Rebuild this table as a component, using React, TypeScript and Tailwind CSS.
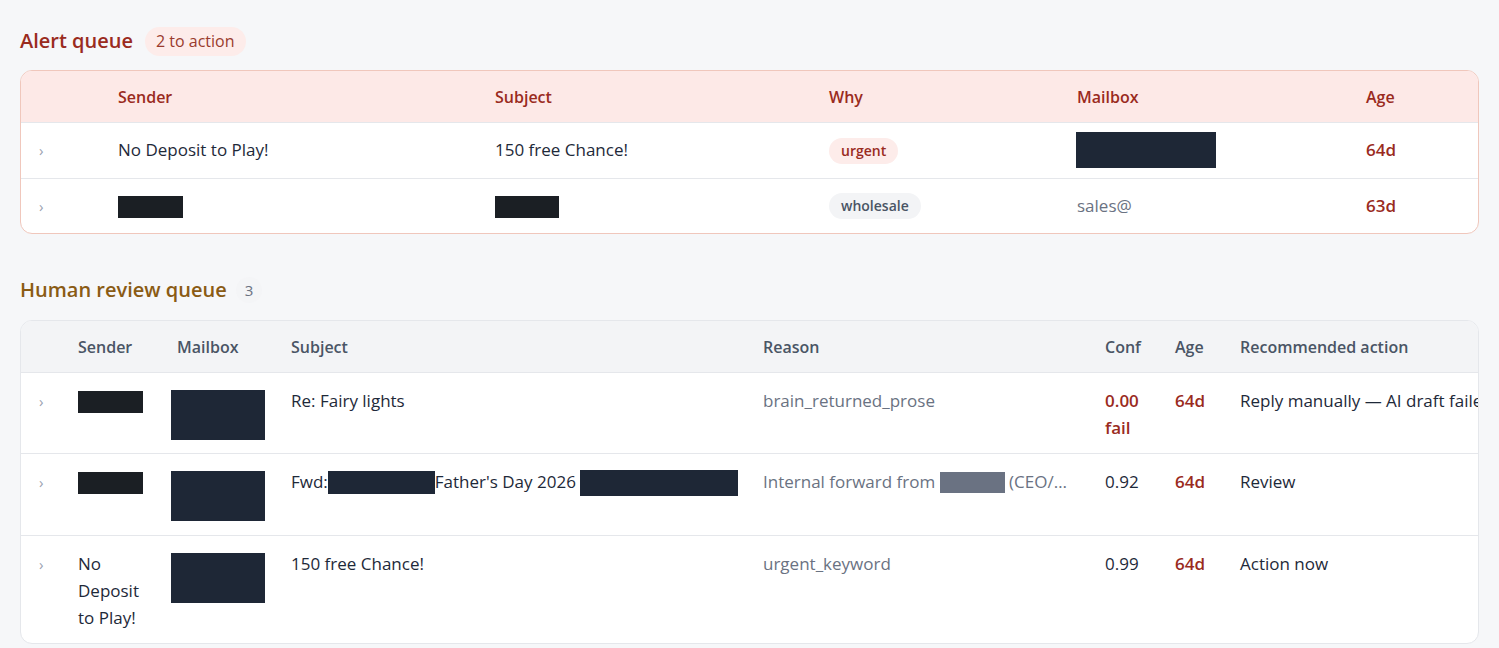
import React from 'react';

const font = { fontFamily: '"Open Sans", "Noto Sans", sans-serif' };

function Redact({ className }: { className: string }) {
  return <span className={`inline-block align-middle ${className}`} />;
}

function Chevron() {
  return <span className="-ml-0.5 text-[15px] text-gray-400">›</span>;
}

function AlertQueue() {
  return (
    <section>
      <div className="flex items-center gap-[12px] h-[30px]">
        <h2 className="text-[20px] font-semibold text-[#9a2b1e]">Alert queue</h2>
        <span className="rounded-full bg-[#fdecea] px-[11px] h-[29px] leading-[29px] text-[16px] text-[#9a3b2e]">2 to action</span>
      </div>
      <div className="mt-[14px] overflow-hidden rounded-xl border border-[#f0c7bc] bg-white">
        <table className="w-full table-fixed border-collapse text-[17px] text-gray-800">
          <colgroup>
            <col className="w-[77px]" />
            <col className="w-[377px]" />
            <col className="w-[334px]" />
            <col className="w-[248px]" />
            <col className="w-[289px]" />
            <col />
          </colgroup>
          <thead>
            <tr className="h-[51px] bg-[#fde9e7] text-left text-[16px] text-[#9a2b1e]">
              <th className="pl-5" />
              <th className="px-5 pt-[2px] font-semibold">Sender</th>
              <th className="px-5 pt-[2px] font-semibold">Subject</th>
              <th className="px-5 pt-[2px] font-semibold">Why</th>
              <th className="px-5 pt-[2px] font-semibold">Mailbox</th>
              <th className="px-5 pt-[2px] font-semibold">Age</th>
            </tr>
          </thead>
          <tbody>
            <tr className="h-[56px] border-t border-gray-200">
              <td className="pl-5"><Chevron /></td>
              <td className="px-5">No Deposit to Play!</td>
              <td className="px-5">150 free Chance!</td>
              <td className="px-5">
                <span className="inline-block rounded-full bg-[#fdecea] px-3 h-[26px] leading-[26px] text-[14px] font-semibold text-[#9a2b1e]">urgent</span>
              </td>
              <td className="px-5"><Redact className="h-[36px] w-[140px] -ml-px bg-[#1e2736]" /></td>
              <td className="px-5 font-semibold text-[#9a2b1e]">64d</td>
            </tr>
            <tr className="h-[55px] border-t border-gray-200">
              <td className="pl-5"><Chevron /></td>
              <td className="px-5"><Redact className="h-[22px] w-[65px] bg-[#1b1f24]" /></td>
              <td className="px-5"><Redact className="h-[22px] w-[64px] bg-[#1b1f24]" /></td>
              <td className="px-5">
                <span className="inline-block rounded-full bg-gray-100 px-3 h-[26px] leading-[26px] text-[14px] font-semibold text-gray-600">wholesale</span>
              </td>
              <td className="px-5 text-gray-500">sales@</td>
              <td className="px-5 font-semibold text-[#9a2b1e]">63d</td>
            </tr>
          </tbody>
        </table>
      </div>
    </section>
  );
}

function HumanQueue() {
  const cell = 'px-3 align-top';
  return (
    <section className="mt-[41px]">
      <div className="flex items-center gap-[9px] h-[30px]">
        <h2 className="text-[20px] font-semibold text-[#8a5b14]">Human review queue</h2>
        <span className="rounded-full bg-gray-100/70 px-[9px] h-[26px] leading-[26px] text-[15px] text-gray-500">3</span>
      </div>
      <div className="mt-[15px] overflow-hidden rounded-xl border border-gray-200 bg-white">
        <table className="w-[1600px] table-fixed border-collapse text-[17px] leading-[27px] text-gray-800">
          <colgroup>
            <col className="w-[45px]" />
            <col className="w-[99px]" />
            <col className="w-[114px]" />
            <col className="w-[472px]" />
            <col className="w-[342px]" />
            <col className="w-[70px]" />
            <col className="w-[65px]" />
            <col />
          </colgroup>
          <thead>
            <tr className="h-[51px] bg-gray-100 text-left text-[16px] text-gray-600">
              <th className="pl-5" />
              <th className="px-3 pt-[3px] font-semibold">Sender</th>
              <th className="px-3 pt-[3px] font-semibold">Mailbox</th>
              <th className="px-3 pt-[3px] font-semibold">Subject</th>
              <th className="px-3 pt-[3px] font-semibold">Reason</th>
              <th className="px-3 pt-[3px] font-semibold">Conf</th>
              <th className="px-3 pt-[3px] font-semibold">Age</th>
              <th className="px-3 pt-[3px] font-semibold">Recommended action</th>
            </tr>
          </thead>
          <tbody>
            <tr className="border-t border-gray-200">
              <td className="pl-5 pt-[14px] align-top"><Chevron /></td>
              <td className={`${cell} pt-[14px]`}><Redact className="h-[22px] w-[65px] bg-[#1b1f24]" /></td>
              <td className={`${cell} pt-[17px] pb-[13px]`}><Redact className="h-[50px] w-[94px] -ml-1.5 bg-[#1e2736]" /></td>
              <td className={`${cell} pt-[14px]`}>Re: Fairy lights</td>
              <td className={`${cell} pt-[14px] text-gray-500`}>brain_returned_prose</td>
              <td className={`${cell} pt-[14px] font-semibold text-[#9a2b1e]`}>0.00<br />fail</td>
              <td className={`${cell} pt-[14px] font-semibold text-[#9a2b1e]`}>64d</td>
              <td className={`${cell} pt-[14px] whitespace-nowrap`}>Reply manually — AI draft failed</td>
            </tr>
            <tr className="border-t border-gray-200">
              <td className="pl-5 pt-[14px] align-top"><Chevron /></td>
              <td className={`${cell} pt-[14px]`}><Redact className="h-[22px] w-[65px] bg-[#1b1f24]" /></td>
              <td className={`${cell} pt-[17px] pb-[14px]`}><Redact className="h-[50px] w-[94px] -ml-1.5 bg-[#1e2736]" /></td>
              <td className={`${cell} pt-[14px] whitespace-nowrap`}>
                Fwd:<Redact className="h-[23px] w-[107px] bg-[#1e2736]" />Father's Day 2026 <Redact className="h-[26px] w-[158px] bg-[#1e2736]" />
              </td>
              <td className={`${cell} pt-[14px] text-gray-500`}>
                <div className="max-w-[306px] truncate">
                  Internal forward from <Redact className="h-[21px] w-[65px] bg-gray-500" /> (CEO/Founder)
                </div>
              </td>
              <td className={`${cell} pt-[14px]`}>0.92</td>
              <td className={`${cell} pt-[14px] font-semibold text-[#9a2b1e]`}>64d</td>
              <td className={`${cell} pt-[14px]`}>Review</td>
            </tr>
            <tr className="border-t border-gray-200">
              <td className="pl-5 pt-[14px] align-top"><Chevron /></td>
              <td className={`${cell} pt-[14px] pb-[12px]`}>No Deposit to Play!</td>
              <td className={`${cell} pt-[17px]`}><Redact className="h-[50px] w-[94px] -ml-1.5 bg-[#1e2736]" /></td>
              <td className={`${cell} pt-[14px]`}>150 free Chance!</td>
              <td className={`${cell} pt-[14px] text-gray-500`}>urgent_keyword</td>
              <td className={`${cell} pt-[14px]`}>0.99</td>
              <td className={`${cell} pt-[14px] font-semibold text-[#9a2b1e]`}>64d</td>
              <td className={`${cell} pt-[14px]`}>Action now</td>
            </tr>
          </tbody>
        </table>
      </div>
    </section>
  );
}

export default function App() {
  return (
    <div className="min-h-screen bg-[#f6f7f9] px-5 pt-[26px] pb-6" style={font}>
      <AlertQueue />
      <HumanQueue />
    </div>
  );
}
